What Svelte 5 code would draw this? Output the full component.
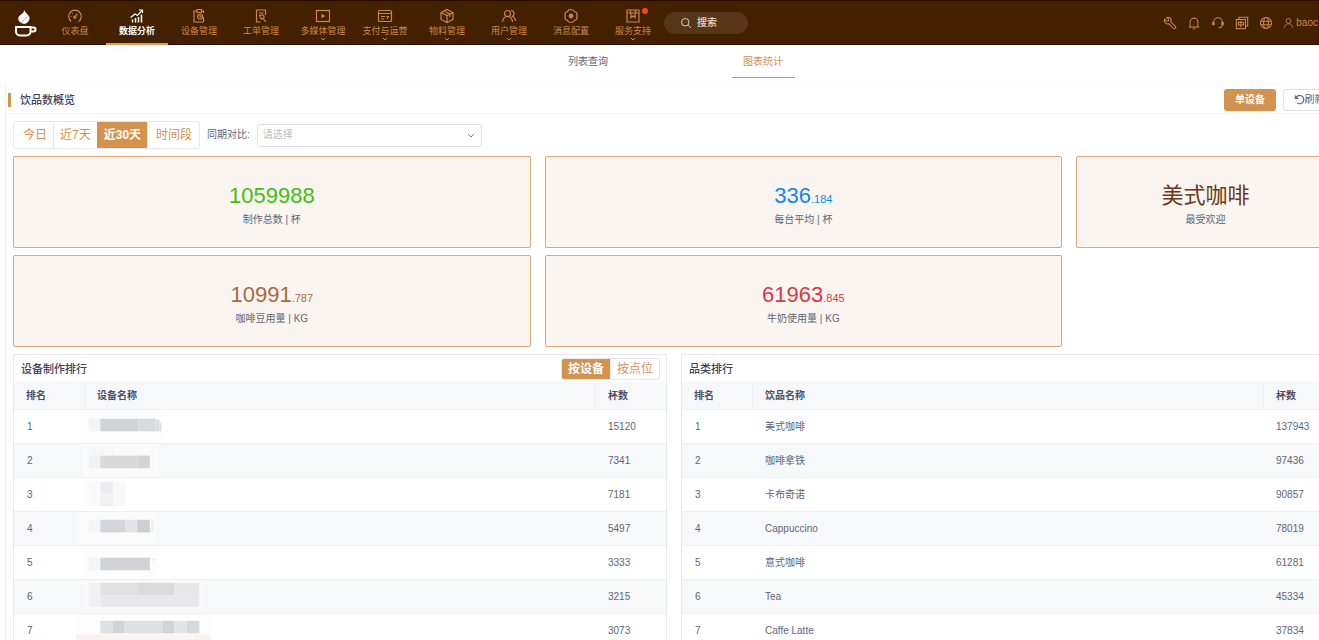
<script>
  const nav = [
    { label: '仪表盘', icon: 'gauge' },
    { label: '数据分析', icon: 'chart', active: true },
    { label: '设备管理', icon: 'clip' },
    { label: '工单管理', icon: 'order' },
    { label: '多媒体管理', icon: 'media', more: true },
    { label: '支付与运营', icon: 'pay', more: true },
    { label: '物料管理', icon: 'box', more: true },
    { label: '用户管理', icon: 'users', more: true },
    { label: '消息配置', icon: 'gear' },
    { label: '服务支持', icon: 'support', more: true, dot: true }
  ];

  const icons = {
    gauge: '<path d="M4.200 13.500a6.300 6.300 0 1 1 7.600 0"/><path d="M8.300 8.500l2-2.700"/><circle cx="7.800" cy="9.200" r="1.100"/><path d="M3.800 8.500h.9M5.200 5.300l.5.500"/>',
    chart: '<path d="M3.500 14.500v-3M6.500 14.500V10M9.500 14.500V9M12.500 14.500V6.500" stroke-width="1.500"/><path d="M1.500 9.500 6 6l2.500 1.500L13 2.500M10 2h3.500v3"/>',
    clip: '<path d="M6 3H3v11h9.500V9M10.500 3h2v2"/><path d="M6 1.500h4.500v3H6z"/><circle cx="9" cy="8.500" r="2.500"/><path d="M9 7v1.700h1.300"/>',
    order: '<path d="M12.500 7V2h-9v12h4"/><path d="M6 5h4.500M6 7.500h1"/><circle cx="9" cy="8.800" r="2"/><path d="M10.300 10.500 12.800 14"/>',
    media: '<rect x="1.500" y="2.500" width="13" height="11"/><path d="M6.500 5.800v4.400L10.200 8z" fill="currentColor" stroke="none"/>',
    pay: '<rect x="1.500" y="2.500" width="13" height="11" rx="1"/><path d="M1.500 5.500h13M4 8.500h4M4 11h3M9.500 8.500H12M10.500 8.500V11"/>',
    box: '<path d="M8 1.500 14 4.500v7L8 14.500 2 11.500v-7zM2 4.500 8 7.500l6-3M8 7.500v7M5 3l6 3v3"/>',
    users: '<circle cx="6.500" cy="5.500" r="3"/><path d="M1.500 14c.3-3 2-5.500 5-5.500s4.700 2.500 5 5.500M10 2.500a3 3 0 0 1 1.300 5.700c2 .8 3 2.800 3.200 4.800"/>',
    gear: '<path d="M5.500 2.200 8 1.500l2.500.7 1 1.300 1.700.8.900 2-.4 1.700.4 1.700-.9 2-1.700.8-1 1.300-2.500.7-2.500-.7-1-1.300-1.700-.8-.9-2L2.300 8l-.4-1.700.9-2 1.700-.8z"/><circle cx="8" cy="8" r="1.800" fill="currentColor"/>',
    support: '<path d="M2 5V2h12v12H2V5h12M5.500 2v3M10.500 2v3M6 5v4.500l2-1.500 2 1.500V5"/>',
    wrench: '<path d="M2 3.500 4.500 6l1.700-.4.300-1.800L4.200 1.600a3.800 3.800 0 0 1 4.800 5l5.100 5.200a1.500 1.500 0 0 1-2.200 2.200L6.600 8.800A3.800 3.800 0 0 1 2 3.500z"/>',
    bell: '<path d="M2 12.500h12M3.500 12.500V7a4.500 4.500 0 0 1 9 0v5.500M8 1v1.500M6.500 14.500h3"/>',
    headset: '<path d="M3 9V7a5 5 0 0 1 10 0v2M13 9c0 3-1.500 4.500-4.500 4.500"/><path d="M2 7.500h1.500v2.500H2zM12.500 7.500H14v2.500h-1.500z" fill="currentColor"/>',
    language: '<path d="M4.500 4V1.500h10v10H12"/><rect x="1.500" y="4" width="10.500" height="10.500"/><path d="M3.800 7.200h6v3h-6zM6.800 5.500V13"/>',
    globe: '<circle cx="8" cy="8" r="6.300"/><ellipse cx="8" cy="8" rx="2.800" ry="6.300"/><path d="M2 6h12M2 10h12"/>',
    user: '<circle cx="8" cy="5" r="3.500"/><path d="M2 15c.5-3.500 2.500-6 6-6s5.500 2.500 6 6"/>',
    search: '<circle cx="7" cy="7" r="5"/><path d="m11 11 3.500 3.500"/>',
    refresh: '<path d="M2 2v4.500h4.500M2.500 6.500A6 6 0 1 1 5 13.200"/>'
  };

  const tools = [
    ['wrench', '工具'],
    ['bell', '通知'],
    ['headset', '客服'],
    ['language', '语言'],
    ['globe', '地区']
  ];

  const stats = [
    { whole: '1059988', label: '制作总数 | 杯', tone: 'green' },
    { whole: '336', part: '.184', label: '每台平均 | 杯', tone: 'blue' },
    { whole: '美式咖啡', label: '最受欢迎', tone: 'coffee' },
    { whole: '10991', part: '.787', label: '咖啡豆用量 | KG', tone: 'brown' },
    { whole: '61963', part: '.845', label: '牛奶使用量 | KG', tone: 'red' }
  ];

  // Masked names: blocks are [x, y, width, height, colour] inside a 140 x 34 cell.
  const devices = [
    { cups: 15120, mask: [[5, 0, 84, 33, '#fdfdfd'], [13, 9, 12, 13, '#f4f4f5'], [25, 9, 39, 13, '#d2d3d8'], [64, 9, 18, 13, '#d9dadf'], [82, 10, 4, 12, '#dcdde1'], [86, 13, 2, 9, '#dfe0e4']] },
    { cups: 7341, mask: [[7, 0, 78, 34, '#fbfbfc'], [13, 2, 26, 10, '#f7f7f8'], [13, 12, 12, 13, '#f0f1f2'], [25, 12, 38, 13, '#d8d9dd'], [63, 12, 13, 13, '#d2d4d8']] },
    { cups: 7181, mask: [[7, 0, 45, 30, '#fdfdfd'], [13, 4, 12, 25, '#fafafb'], [25, 4, 13, 13, '#ececee'], [25, 17, 13, 12, '#f1f1f3'], [38, 4, 12, 25, '#f9f9fa']] },
    { cups: 5497, mask: [[0, 0, 83, 33, '#fbfbfc'], [13, 8, 12, 13, '#f5f5f7'], [25, 8, 26, 13, '#d3d5da'], [51, 8, 12, 13, '#e2e3e6'], [63, 8, 13, 13, '#cbced4'], [77, 9, 3, 12, '#eeeff1']] },
    { cups: 3333, mask: [[7, 0, 78, 32, '#fdfdfd'], [13, 12, 12, 13, '#f6f6f7'], [25, 12, 51, 13, '#d2d3d9'], [79, 13, 2, 2, '#dedfe3']] },
    { cups: 3215, mask: [[7, 0, 122, 34, '#fafafb'], [13, 3, 12, 25, '#f1f1f3'], [25, 3, 38, 13, '#e1e1e5'], [63, 3, 38, 13, '#dadbdf'], [101, 3, 26, 13, '#e7e7ea'], [25, 16, 102, 12, '#e8e8eb']] },
    { cups: 3073, mask: [[0, 0, 139, 22, '#fdfdfd'], [25, 7, 13, 13, '#dedfe3'], [38, 7, 12, 13, '#d2d3d9'], [50, 7, 39, 13, '#dedfe3'], [89, 7, 12, 13, '#d2d3d9'], [101, 7, 13, 13, '#e3e4e7'], [114, 7, 13, 13, '#d6d8dd'], [0, 21, 139, 6, '#fbf3f0']] }
  ];

  const drinks = [
    ['美式咖啡', 137943],
    ['咖啡拿铁', 97436],
    ['卡布奇诺', 90857],
    ['Cappuccino', 78019],
    ['意式咖啡', 61281],
    ['Tea', 45334],
    ['Caffe Latte', 37834]
  ];

  let range = $state('近30天');
  let grouping = $state('按设备');
</script>

{#snippet icon(name)}
  <svg class="icon" viewBox="0 0 16 16" aria-hidden="true">{@html icons[name]}</svg>
{/snippet}

<div class="viewport">
  <div class="page">
    <header>
      <a class="logo" href="#home" aria-label="首页">
        <svg viewBox="0 0 24 30" aria-hidden="true">
          <path d="M10.500 2c1 4 6 5.500 5 9-.6 3-3 4.500-5.500 5C6 15 3.500 12.500 4.500 9.500c1-2.600 5-3.500 6-7.500z" fill="#fff" />
          <path d="M13 8.500c-1 2.500-4 3-5 6" fill="none" stroke="#b7a594" stroke-width="1" />
          <path d="M2 19h14.500v4.500a4 4 0 0 1-4 4H6a4 4 0 0 1-4-4z" fill="none" stroke="#fff" stroke-width="2" />
          <path d="M17 19.500h2.500a2 2 0 0 1 0 4H17" fill="none" stroke="#fff" stroke-width="2" />
        </svg>
      </a>
      <nav>
        {#each nav as item}
          <a href="#nav" class:active={item.active}>
            {@render icon(item.icon)}
            <span>{item.label}</span>
            {#if item.more}<svg class="more" viewBox="0 0 6 4" aria-hidden="true"><path d="m1 1 2 2 2-2" /></svg>{/if}
            {#if item.dot}<i class="dot"></i>{/if}
          </a>
        {/each}
      </nav>
      <button class="search">{@render icon('search')}搜索</button>
      <div class="tools">
        {#each tools as [name, label]}
          <button aria-label={label}>{@render icon(name)}</button>
        {/each}
        <button class="account">{@render icon('user')}baoc</button>
      </div>
    </header>

    <div class="tabs">
      <a href="#list">列表查询</a>
      <a href="#charts" class="active">图表统计</a>
    </div>

    <main>
      <div class="title">
        <h1>饮品数概览</h1>
        <button class="primary">单设备</button>
        <button class="plain">{@render icon('refresh')}刷新</button>
      </div>

      <div class="filters">
        <div class="group">
          {#each ['今日', '近7天', '近30天', '时间段'] as name}
            <button class:on={range === name} onclick={() => (range = name)}>{name}</button>
          {/each}
        </div>
        <label for="compare">同期对比:</label>
        <div class="select">
          <select id="compare"><option>请选择</option></select>
          <svg viewBox="0 0 8 5" aria-hidden="true"><path d="m1 1 3 3 3-3" /></svg>
        </div>
      </div>

      <section class="stats">
        {#each stats as stat}
          <div class="stat">
            <div class="value {stat.tone}">{stat.whole}{#if stat.part}<small>{stat.part}</small>{/if}</div>
            <div class="caption">{stat.label}</div>
          </div>
        {/each}
      </section>

      <section class="ranks">
        <article>
          <div class="head">
            <h2>设备制作排行</h2>
            <div class="group small">
              {#each ['按设备', '按点位'] as name}
                <button class:on={grouping === name} onclick={() => (grouping = name)}>{name}</button>
              {/each}
            </div>
          </div>
          <table>
            <thead><tr><th class="rank">排名</th><th>设备名称</th><th class="cups">杯数</th></tr></thead>
            <tbody>
              {#each devices as row, i}
                <tr>
                  <td>{i + 1}</td>
                  <td class="masked">
                    <svg viewBox="0 0 140 34" aria-hidden="true">
                      {#each row.mask as [x, y, w, h, fill]}
                        <rect {x} {y} width={w} height={h} {fill} />
                      {/each}
                    </svg>
                  </td>
                  <td>{row.cups}</td>
                </tr>
              {/each}
            </tbody>
          </table>
        </article>
        <article>
          <div class="head"><h2>品类排行</h2></div>
          <table>
            <thead><tr><th class="rank">排名</th><th>饮品名称</th><th class="cups">杯数</th></tr></thead>
            <tbody>
              {#each drinks as [name, cups], i}
                <tr><td>{i + 1}</td><td>{name}</td><td>{cups}</td></tr>
              {/each}
            </tbody>
          </table>
        </article>
      </section>
    </main>
  </div>
</div>

<style>
  :global(body) {
    margin: 0;
    background: #fff;
  }
  .viewport {
    height: 100vh;
    overflow: hidden;
    font-family: 'Liberation Sans', 'Noto Sans CJK SC', sans-serif;
    font-size: 10px;
    line-height: 16px;
    color: #606579;
  }
  .viewport * {
    box-sizing: border-box;
  }
  .page {
    width: calc(100% + 32px);
  }
  button {
    font: inherit;
    color: inherit;
    background: none;
    border: 0;
    padding: 0;
    white-space: nowrap;
    cursor: pointer;
  }
  a {
    color: inherit;
    text-decoration: none;
  }
  svg {
    display: block;
    flex: none;
  }
  .icon {
    width: 14px;
    height: 14px;
    fill: none;
    stroke: currentColor;
    stroke-width: 1.2;
  }

  header {
    display: flex;
    align-items: center;
    height: 45px;
    background: #432000;
    border-top: 1px solid #2b0d00;
    border-bottom: 1px solid #2b0d00;
    color: #c9884a;
  }
  .logo {
    width: 44px;
    padding-left: 14px;
  }
  .logo svg {
    width: 24px;
    height: 30px;
  }
  nav {
    display: flex;
    align-self: stretch;
  }
  nav a {
    position: relative;
    display: flex;
    flex-direction: column;
    align-items: center;
    width: 62px;
    height: 44px;
    padding-top: 7px;
    font-size: 9px;
    line-height: 14px;
    white-space: nowrap;
  }
  nav .icon {
    width: 16px;
    height: 16px;
  }
  nav a.active {
    color: #fff;
    font-weight: bold;
    border-bottom: 2px solid #e29a58;
  }
  .more {
    position: absolute;
    bottom: 4px;
    width: 6px;
    height: 4px;
    fill: none;
    stroke: currentColor;
  }
  .dot {
    position: absolute;
    top: 7px;
    right: 16px;
    width: 6px;
    height: 6px;
    border-radius: 50%;
    background: #ff4318;
  }
  .search {
    display: flex;
    align-items: center;
    gap: 5px;
    width: 84px;
    height: 22px;
    padding-left: 16px;
    border-radius: 11px;
    background: #563616;
    color: #e4ddd6;
    font-weight: 500;
  }
  .search .icon {
    width: 12px;
    height: 12px;
  }
  .tools {
    display: flex;
    align-items: center;
    gap: 10px;
    margin-left: auto;
    padding-right: 33px;
  }
  .account {
    display: flex;
    align-items: center;
    gap: 2px;
  }
  .account .icon {
    width: 11px;
    height: 12px;
  }

  .tabs {
    display: flex;
    justify-content: center;
    gap: 112px;
    height: 40px;
    border-bottom: 1px solid #fafafa;
  }
  .tabs a {
    width: 63px;
    height: 33px;
    padding-top: 9px;
    text-align: center;
  }
  .tabs .active {
    color: #d3924e;
    border-bottom: 1px solid #d3924e;
  }

  main {
    margin: 0 8px 0 5px;
    padding: 0 8px 0 7px;
    border-left: 1px solid #ebeef5;
  }
  .title {
    display: flex;
    align-items: center;
    gap: 7px;
    height: 29px;
    margin: 0 -8px 7px -5px;
    padding-top: 1px;
    border-bottom: 1px solid #f4f4f6;
  }
  h1,
  h2 {
    margin: 0;
    font-size: 11px;
    line-height: 14px;
    font-weight: 500;
    color: #3d4260;
  }
  h1 {
    margin-right: auto;
    padding-left: 9px;
    border-left: 3px solid #d3924e;
  }
  .primary,
  .plain {
    width: 52px;
    height: 22px;
    border-radius: 3px;
  }
  .primary {
    background: #d3924e;
    color: #fff;
    font-weight: bold;
  }
  .plain {
    display: flex;
    align-items: center;
    justify-content: center;
    border: 1px solid #dcdfe6;
    margin-right: 8px;
  }
  .plain .icon {
    width: 11px;
    height: 11px;
    stroke-width: 1.8;
  }

  .filters {
    display: flex;
    align-items: center;
    gap: 7px;
    margin-bottom: 7px;
  }
  .group {
    display: flex;
    border: 1px solid #e4e7ed;
    border-radius: 3px;
    overflow: hidden;
    color: #d3924e;
    font-size: 12px;
  }
  .group button {
    height: 26px;
    padding: 0 6px;
    border-left: 1px solid #e4e7ed;
  }
  .group button:first-child {
    border-left: 0;
    padding: 0 6px 0 9px;
  }
  .group button:last-child {
    padding: 0 7px 0 8px;
  }
  .group .on {
    background: #d3924e;
    color: #fff;
    font-weight: bold;
    border-color: #d3924e;
  }
  .select {
    position: relative;
    width: 225px;
  }
  select {
    width: 100%;
    height: 23px;
    padding: 0 5px;
    appearance: none;
    border: 1px solid #dcdfe6;
    border-radius: 3px;
    background: #fff;
    font: inherit;
    color: #b9bcc5;
  }
  .select svg {
    position: absolute;
    top: 9px;
    right: 7px;
    width: 8px;
    height: 5px;
    fill: none;
    stroke: #7d818c;
    pointer-events: none;
  }

  .stats {
    display: grid;
    grid-template-columns: 2fr 2fr 1fr;
    gap: 7px 14px;
    margin-bottom: 7px;
  }
  .stat {
    padding: 24px 0 18px;
    border: 1px solid #dda672;
    border-radius: 2px;
    background: #faf5f0;
    text-align: center;
  }
  .value {
    height: 30px;
    font-size: 22px;
    line-height: 30px;
    white-space: nowrap;
  }
  .value small {
    font-size: 11px;
  }
  .caption {
    line-height: 18px;
  }
  .green {
    color: #3fc10c;
  }
  .blue {
    color: #0f86f2;
  }
  .coffee {
    color: #6b3817;
  }
  .brown {
    color: #a9693f;
  }
  .red {
    color: #d8394a;
  }

  .ranks {
    display: grid;
    grid-template-columns: 1fr 1fr;
    gap: 14px;
  }
  article {
    border: 1px solid #e6e8ee;
  }
  .head {
    display: flex;
    align-items: center;
    justify-content: space-between;
    height: 27px;
    padding: 0 6px 0 7px;
  }
  .group.small button {
    height: 20px;
    padding: 0 6px;
  }
  table {
    width: 100%;
    table-layout: fixed;
    border-collapse: separate;
    border-spacing: 0;
  }
  th,
  td {
    padding: 0 12px;
    text-align: left;
    border-bottom: 1px solid #eef0f4;
  }
  td {
    height: 34px;
    padding-left: 13px;
  }
  th {
    height: 28px;
    background: #f7f8fa;
    color: #4a4f66;
  }
  th + th {
    border-left: 1px solid #ebeef5;
  }
  tr:nth-child(even) td {
    background: #f7f8fa;
  }
  .rank {
    width: 70px;
  }
  .cups {
    width: 71px;
  }
  .masked {
    padding: 0;
  }
  .masked svg {
    width: 140px;
    height: 33px;
    margin-left: -10px;
  }
</style>
